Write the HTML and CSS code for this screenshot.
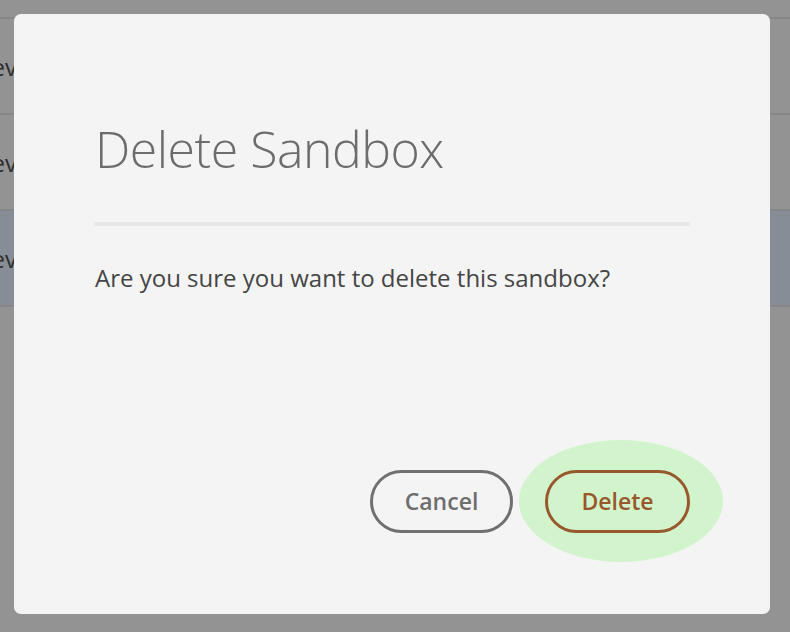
FILE: index.html
```html
<!DOCTYPE html>
<html>
<head>
<meta charset="utf-8">
<link rel="stylesheet" href="styles.css">
</head>
<body>
<div class="page">
  <div class="list">
    <div class="row"><span class="cell">Dev</span></div>
    <div class="row"><span class="cell">Dev</span></div>
    <div class="row selected"><span class="cell">Dev</span></div>
    <div class="row"></div>
  </div>
</div>
<div class="overlay">
  <div class="dialog">
    <h1 class="title">Delete Sandbox</h1>
    <div class="divider"></div>
    <p class="body">Are you sure you want to delete this sandbox?</p>
    <div class="actions">
      <button class="btn cancel">Cancel</button>
      <div class="highlight">
        <button class="btn delete">Delete</button>
      </div>
    </div>
  </div>
</div>
</body>
</html>
```
FILE: styles.css
```css
html, body {
  margin: 0;
  padding: 0;
  width: 790px;
  height: 632px;
  overflow: hidden;
  background: #939393;
  font-family: "Open Sans", "Noto Sans", sans-serif;
}
.page {
  padding-top: 17px;
}
.list {
  display: flex;
  flex-direction: column;
}
.row {
  height: 94px;
  border-top: 2px solid #868686;
  display: flex;
  align-items: center;
  overflow: hidden;
}
.row.selected {
  background: #878d96;
}
.cell {
  margin-left: -26px;
  font-size: 24px;
  color: #2e2e2e;
}
.overlay {
  position: absolute;
  left: 14px;
  top: 14px;
}
.dialog {
  height: 600px;
  box-sizing: border-box;
  width: 756px;
  padding: 110px 80px 0 80px;
  background: #f4f4f4;
  border-radius: 7px;
  display: flex;
  flex-direction: column;
}
.title {
  margin: 0 0 0 1px;
  font-weight: 300;
  font-size: 50px;
  line-height: 50px;
  color: #6c6c6c;
  letter-spacing: -0.5px;
}
.divider {
  margin-top: 48px;
  height: 4px;
  background: #e7e7e7;
}
.body {
  margin: 37px 0 0 1px;
  font-size: 24px;
  line-height: 30px;
  color: #454545;
}
.actions {
  margin-top: 147px;
  display: flex;
  justify-content: flex-end;
  align-items: center;
}
.btn {
  height: 63px;
  border-radius: 32px;
  background: transparent;
  font-family: "Open Sans", "Noto Sans", sans-serif;
  font-weight: 600;
  font-size: 23px;
  box-sizing: border-box;
  padding: 0;
}
.cancel {
  width: 143px;
  border: 3.5px solid #707070;
  color: #6e6e6e;
  margin-right: 6px;
}
.highlight {
  width: 204px;
  height: 122px;
  border-radius: 50%;
  background: #d2f4cc;
  display: flex;
  align-items: center;
  justify-content: flex-end;
  margin-right: -33px;
}
.delete {
  width: 145px;
  border: 3.5px solid #97582b;
  color: #97582b;
  margin-right: 33px;
}
```
